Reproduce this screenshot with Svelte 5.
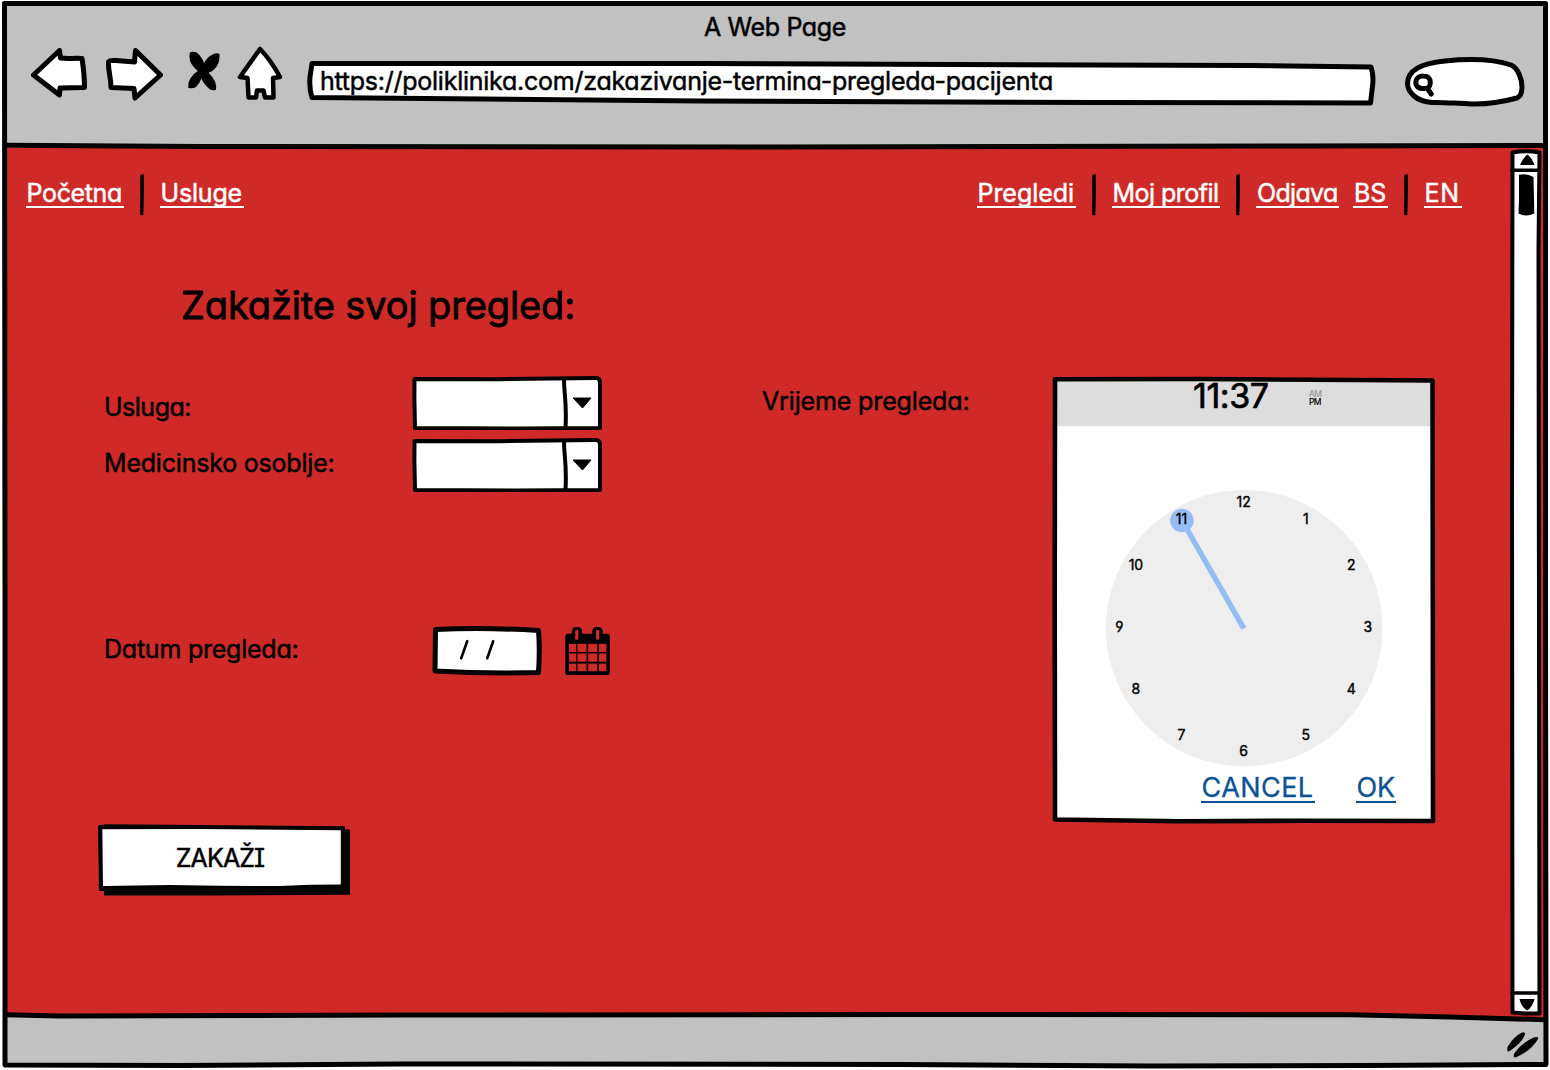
<script>
  // Spreads the letters of a label so that it fills the given width.
  function fit(node, width) {
    const natural = node.getBoundingClientRect().width;
    node.style.letterSpacing = `${(width - natural) / node.textContent.length}px`;
  }

  const left = [
    { text: 'Početna', width: 98 },
    { text: 'Usluge', width: 84 }
  ];
  const right = [
    { text: 'Pregledi', width: 99 },
    { text: 'Moj profil', width: 108.5 },
    { text: 'Odjava', width: 83 }
  ];
  const languages = [
    { text: 'BS', width: 34.5 },
    { text: 'EN', width: 38 }
  ];

  const hours = Array.from({ length: 12 }, (_, i) => {
    const n = i + 1;
    const angle = (n * Math.PI) / 6;
    return {
      n,
      x: 1243.6 + 124.3 * Math.sin(angle),
      y: 626.8 - 124.5 * Math.cos(angle) + 5
    };
  });

  const cellColumns = [[569, 7.2], [577.5, 9], [588.2, 9], [599, 7.3]];
  const cellRows = [[643.8, 8.2], [653.4, 8.3], [663.6, 7.6]];
</script>

{#snippet links(items)}
  {#each items as item, i}
    {#if i > 0}
      <svg class="divider" viewBox="0 0 4 42"><path d="M.3 1.2 3.8 0 4 12 3.4 41 1 41.6.2 40Z" /></svg>
    {/if}
    <a href="#top" class="link"><span use:fit={item.width - 2.5}>{item.text}</span></a>
  {/each}
{/snippet}

{#snippet combo()}
  <svg class="combo" viewBox="412 376 190 54" width="190" height="54">
    <path class="box" stroke-width="4" d="M414.5 379 500 379.2 596 378Q600 378 600 383L600 428 520 428.6 415 428 414.4 400Z" />
    <path class="line" stroke-width="4" d="M564 379C564 395 567 402 565.5 428" />
    <path d="M573 398H591L582.5 408Z" stroke="#000" stroke-width="1" stroke-linejoin="round" />
  </svg>
{/snippet}

<div class="window" id="top">
  <header class="chrome">
    <div class="title"><span use:fit={142}>A Web Page</span></div>
    <div class="toolbar">
      <svg class="back" viewBox="31 44 56 64" width="56" height="64">
        <path class="box" stroke-width="5" d="M59.5 50.5 33.5 75 59.5 95 60 88 84.5 87.5C84.5 77 83.5 68 82 58.5 74 58 67 59 60.5 58Z" />
      </svg>
      <svg class="forward" viewBox="105 44 58 64" width="58" height="64">
        <path class="box" stroke-width="5" d="M135.5 50.5 160.5 75 135 98 134 88.5 111 87.5C111 77 108 71 108.5 62Q109 60 116 60.5L134.5 62Z" />
      </svg>
      <svg class="stop" viewBox="187 44 33 64" width="33" height="64">
        <path d="M190 52.3Q193 51 196.700 52.600 202 57 204 63 207.500 56.500 213 54.200 217 52.500 219.500 54 220 61 217 66 213.500 71 208.500 72.800 213 77 215 81.500 216.800 86 216 89.700 213 91 210 89.500 203.500 84 201.300 78.500 199.500 84 196 87 192.500 89 188.300 87.700 187.500 83 190.300 78.500 193.500 73.500 197.800 71 192 66 190 61 188.800 56 190 52.300Z" />
      </svg>
      <svg class="home" viewBox="237 44 46 64" width="46" height="64">
        <path class="box" stroke-width="4.5" d="M260 49 240 77 247.500 78 248.500 97.500 256 97.500 257 90.500 263.500 90.500 265 97.500 273.500 97.500 273 78 280 77C274 66 268 57 260 49Z" />
      </svg>
      <div class="address">
        <svg class="outline" viewBox="306 44 1070 64">
          <path class="box" stroke-width="5" d="M312 63.500 700 63.500 1250 65.500 1371 67Q1374 76 1372.500 86L1370.500 103 1100 102.500 700 101 312 97.500Q309 88 310 77Z" />
        </svg>
        <span class="url" use:fit={733}>https://poliklinika.com/zakazivanje-termina-pregleda-pacijenta</span>
      </div>
      <svg class="search" viewBox="1404 44 121 64" width="121" height="64">
        <path class="box" stroke-width="5" d="M1432 102.500C1416 101.500 1407.500 92 1407.500 83 1408 69 1424 63 1445 61 1470 58.500 1495 59.500 1511 65 1518 68 1522 79 1522 87 1522 92 1521.500 96 1517 98 1500 102.500 1487 104.500 1472 104 1455 103.500 1444 102 1432 102.500Z" />
        <path class="line" stroke-width="5" d="M1423.500 76C1418.500 75.500 1415.800 79 1415.800 82.500 1415.800 86.500 1419 88.800 1424 88.500 1429 88.500 1430.300 86 1430.300 82.500 1430.500 78.500 1428 76 1423.500 76ZM1427.500 88.500 1431.200 94" />
      </svg>
    </div>
  </header>

  <div class="viewport">
    <main>
      <nav>
        <div class="group">{@render links(left)}</div>
        <div class="group end">{@render links(right)}</div>
        <div class="group languages">{@render links(languages)}</div>
      </nav>

      <h1><span use:fit={394}>Zakažite svoj pregled:</span></h1>

      <div class="body">
        <form>
          <div class="row service">
            <span class="name"><span use:fit={87}>Usluga:</span></span>
            {@render combo()}
          </div>
          <div class="row staff">
            <span class="name"><span use:fit={230.5}>Medicinsko osoblje:</span></span>
            {@render combo()}
          </div>
          <div class="row date">
            <span class="name"><span use:fit={194.5}>Datum pregleda:</span></span>
            <svg class="datebox" viewBox="432 625 110 51" width="110" height="51">
              <path class="box" stroke-width="5" stroke-linejoin="miter" d="M435.500 629.500C470 628 505 628.500 538.500 630.500 539.500 643 539.500 657 538.500 672.500 505 673.500 470 673 435 671Z" />
              <path class="line" stroke-width="2.6" d="M467.200 641.200 461.200 658.200M493.200 641.200 487.200 658.200" />
            </svg>
            <svg class="calendar" viewBox="565 625 46 51" width="46" height="51">
              <rect x="565.300" y="633.800" width="44.500" height="41.200" rx="2.500" />
              <rect x="571.800" y="627" width="10.300" height="15" rx="4.500" />
              <rect x="592.300" y="627" width="10.500" height="15" rx="4.500" />
              <rect class="hole" x="575.200" y="630" width="3.200" height="9.700" rx="1" />
              <rect class="hole" x="596" y="630" width="3.200" height="9.700" rx="1" />
              {#each cellRows as [y, h]}
                {#each cellColumns as [x, w]}
                  <rect class="hole" {x} {y} width={w} height={h} />
                {/each}
              {/each}
            </svg>
          </div>
          <button type="button">
            <svg class="outline" viewBox="98 824 252 72">
              <path d="M98 825.500 106 824.300 200 825 345 826.200 345 829.200 350 829.500 350 894.800 200 895.500 104 895.500 104 891 99 891Z" />
              <path fill="#fff" d="M102.300 829.300 200 829 340.800 830.200 340.800 884.600 310 884.800 280 886 220 885.800 170 885 103 886Z" />
            </svg>
            <span class="caption" use:fit={88.5}>ZAKAŽI</span>
          </button>
        </form>

        <span class="time-label"><span use:fit={207.5}>Vrijeme pregleda:</span></span>

        <section class="picker">
          <svg class="outline" viewBox="1052 376 384 448">
            <path fill="#fff" d="M1055 379H1433V821H1055Z" />
            <path fill="#ddd" d="M1056 380H1432V426.300H1056Z" />
            <circle cx="1244.200" cy="628.200" r="138.300" fill="#eee" />
            <path d="M1243.800 628.300 1182 520.500" stroke="#97bcf4" stroke-width="5.500" />
            <circle cx="1181.900" cy="520.500" r="11.800" fill="#97bcf4" />
            {#each hours as hour}
              <text class="hour" x={hour.x} y={hour.y}>{hour.n}</text>
            {/each}
            <path fill="none" stroke="#000" stroke-width="4.600" stroke-linejoin="round" d="M1055 379.200 1200 379 1432.500 380.500 1432.800 600 1433 821 1300 820.800 1180 821.200 1055 819.500 1054.700 600Z" />
          </svg>
          <div class="readout">
            <span class="clock"><span use:fit={75.5}>11:37</span></span>
            <span class="half"><span class="off">AM</span><span>PM</span></span>
          </div>
          <div class="actions">
            <a href="#top" class="action"><span use:fit={112}>CANCEL</span></a>
            <a href="#top" class="action"><span use:fit={38.5}>OK</span></a>
          </div>
        </section>
      </div>
    </main>

    <svg class="scrollbar" viewBox="1508 148 36 869" width="36" height="869">
      <path fill="#fff" stroke="#000" stroke-width="4" stroke-linejoin="round" d="M1512.500 152.500Q1526 150 1539.500 152.500L1538.500 250 1539.500 1013.500 1525 1013.500 1512.500 1012.500 1512 500Z" />
      <path class="line" stroke-width="3.600" d="M1512 170.300H1539M1512 993H1539" />
      <path d="M1527.500 154.500Q1532 158 1534.500 165H1520Q1523 158 1527.500 154.500Z" />
      <path d="M1519.500 999H1534.500Q1533 1006 1527.500 1010.500 1521 1007 1519.500 999Z" />
      <path d="M1519 174.800Q1526 173 1533.500 177L1534.300 213.500Q1526 217.500 1518.500 213.500L1519 200Z" />
    </svg>
  </div>

  <footer>
    <svg class="grip" viewBox="1504 1028 38 34" width="38" height="34">
      <path d="M1522 1032.500Q1525 1031.500 1525 1034.500 1522 1043 1509 1051.500 1506.500 1052 1507.500 1047 1513 1037 1522 1032.500Z" />
      <path d="M1533.500 1037.500Q1539 1036 1538 1039 1531 1051 1515.500 1057.500 1512.500 1058 1514.500 1053 1521 1043.500 1533.500 1037.500Z" />
    </svg>
  </footer>

  <svg class="frame" viewBox="0 0 1550 1070">
    <path d="M4.500 3.500 1545.500 3.500 1545.500 600 1546 1064.500 1365 1065.500 1150 1066 900 1064.500 400 1064 180 1065.500 5 1065 5 600Z" />
    <path d="M5 145.300 200 146.500 775 147 1300 146 1545 145.400" />
    <path d="M5 1014.700 60 1016 400 1015 900 1014.500 1350 1014.800 1450 1017 1545 1019.700" />
  </svg>
</div>

<style>
  :global(body) {
    margin: 0;
    background: #fff;
  }

  .window {
    position: relative;
    display: flex;
    flex-direction: column;
    width: 1550px;
    height: 1070px;
    overflow: hidden;
    font: 25px/30px Inter, sans-serif;
    font-feature-settings: 'cv11', 'cv04', 'cv08', 'liga' 0;
    -webkit-text-stroke: 0.5px currentColor;
    color: #000;
  }

  svg {
    display: block;
    flex: none;
  }

  span {
    display: inline-block;
    white-space: nowrap;
  }

  .box {
    fill: #fff;
    stroke: #000;
    stroke-linejoin: round;
  }

  .line {
    fill: none;
    stroke: #000;
    stroke-linecap: round;
  }

  .outline,
  .frame {
    position: absolute;
    inset: 0;
    width: 100%;
    height: 100%;
  }

  .frame {
    fill: none;
    stroke: #000;
    stroke-width: 5;
    stroke-linejoin: round;
    pointer-events: none;
  }

  .chrome,
  footer {
    margin: 0 5px;
    background: #c1c1c1;
  }

  .chrome {
    box-sizing: border-box;
    height: 145px;
    margin-top: 3px;
    padding-top: 9px;
  }

  .title {
    text-align: center;
  }

  .toolbar {
    display: flex;
    align-items: center;
    margin-top: 2px;
    padding-left: 26px;
  }

  .forward {
    margin-left: 18px;
  }

  .stop {
    margin-left: 24px;
  }

  .home {
    margin-left: 17px;
  }

  .address {
    position: relative;
    width: 1070px;
    height: 64px;
    margin-left: 23px;
  }

  .url {
    position: relative;
    margin: 22px 0 0 14px;
  }

  .search {
    margin-left: 28px;
  }

  .viewport {
    display: flex;
    height: 869px;
    margin: 0 6px;
    background: #cf2a27;
  }

  main {
    width: 1502px;
  }

  nav {
    display: flex;
    height: 45px;
    padding: 24px 0 0 19.5px;
  }

  .group {
    display: flex;
    align-items: center;
    gap: 16px;
  }

  .end {
    margin-left: auto;
  }

  .languages {
    margin: 0 46.500px 0 14px;
  }

  .link {
    box-sizing: border-box;
    height: 29px;
    padding: 0 1.500px 0 1px;
    border-bottom: 2px solid #fff;
    color: #fff;
    text-decoration: none;
    margin-top: -3px;
    line-height: 29px;
  }

  .link span {
    display: block;
  }

  .divider {
    width: 4px;
    height: 42px;
  }

  h1 {
    margin: 65px 0 0 175px;
    font-size: 38px;
    line-height: 46px;
    font-weight: 400;
    -webkit-text-stroke-width: 0.8px;
  }

  .body {
    display: flex;
    margin-top: 48px;
    padding-left: 98px;
  }

  form {
    width: 658px;
  }

  .row {
    display: flex;
    height: 54px;
  }

  .staff {
    margin-top: 8px;
  }

  .date {
    margin-top: 133px;
  }

  .name {
    width: 308px;
    margin-top: 16px;
  }

  .staff .name {
    margin-top: 10px;
  }

  .date .name {
    width: 328px;
    margin-top: 9px;
  }

  .calendar {
    margin-left: 23px;
  }

  .hole {
    fill: #cf2a27;
  }

  button {
    position: relative;
    width: 252px;
    height: 72px;
    margin: 145px 0 0 -6px;
    padding: 0 8px 4px 0;
    border: 0;
    background: none;
    font: inherit;
    font-feature-settings: inherit;
    color: inherit;
  }

  .caption {
    position: relative;
  }

  .time-label {
    width: 290px;
    margin-top: 10px;
  }

  .picker {
    position: relative;
    display: flex;
    flex-direction: column;
    justify-content: space-between;
    width: 384px;
    height: 448px;
  }

  .readout,
  .actions {
    position: relative;
    display: flex;
  }

  .readout {
    padding-left: 141px;
  }

  .clock {
    width: 116px;
    font-size: 34px;
    line-height: 39px;
    -webkit-text-stroke-width: 0.7px;
  }

  .half {
    display: flex;
    flex-direction: column;
    margin-top: 14px;
    font-size: 8.500px;
    line-height: 8px;
    -webkit-text-stroke-width: 0.2px;
    letter-spacing: -0.600px;
  }

  .off {
    color: #999;
  }

  .hour {
    font-size: 14px;
    text-anchor: middle;
    stroke: #000;
    stroke-width: 0.4px;
  }

  .actions {
    justify-content: flex-end;
    gap: 41px;
    padding: 0 40px 21px 0;
  }

  .action {
    padding: 0 1px;
    border-bottom: 2px solid #0b5394;
    color: #0b5394;
    font-size: 27px;
    line-height: 26px;
    text-decoration: none;
    -webkit-text-stroke-width: 0.3px;
  }

  .action span {
    display: block;
  }

  footer {
    display: flex;
    justify-content: flex-end;
    height: 48px;
  }

  .grip {
    margin: 11px 3px 0 0;
  }
</style>
